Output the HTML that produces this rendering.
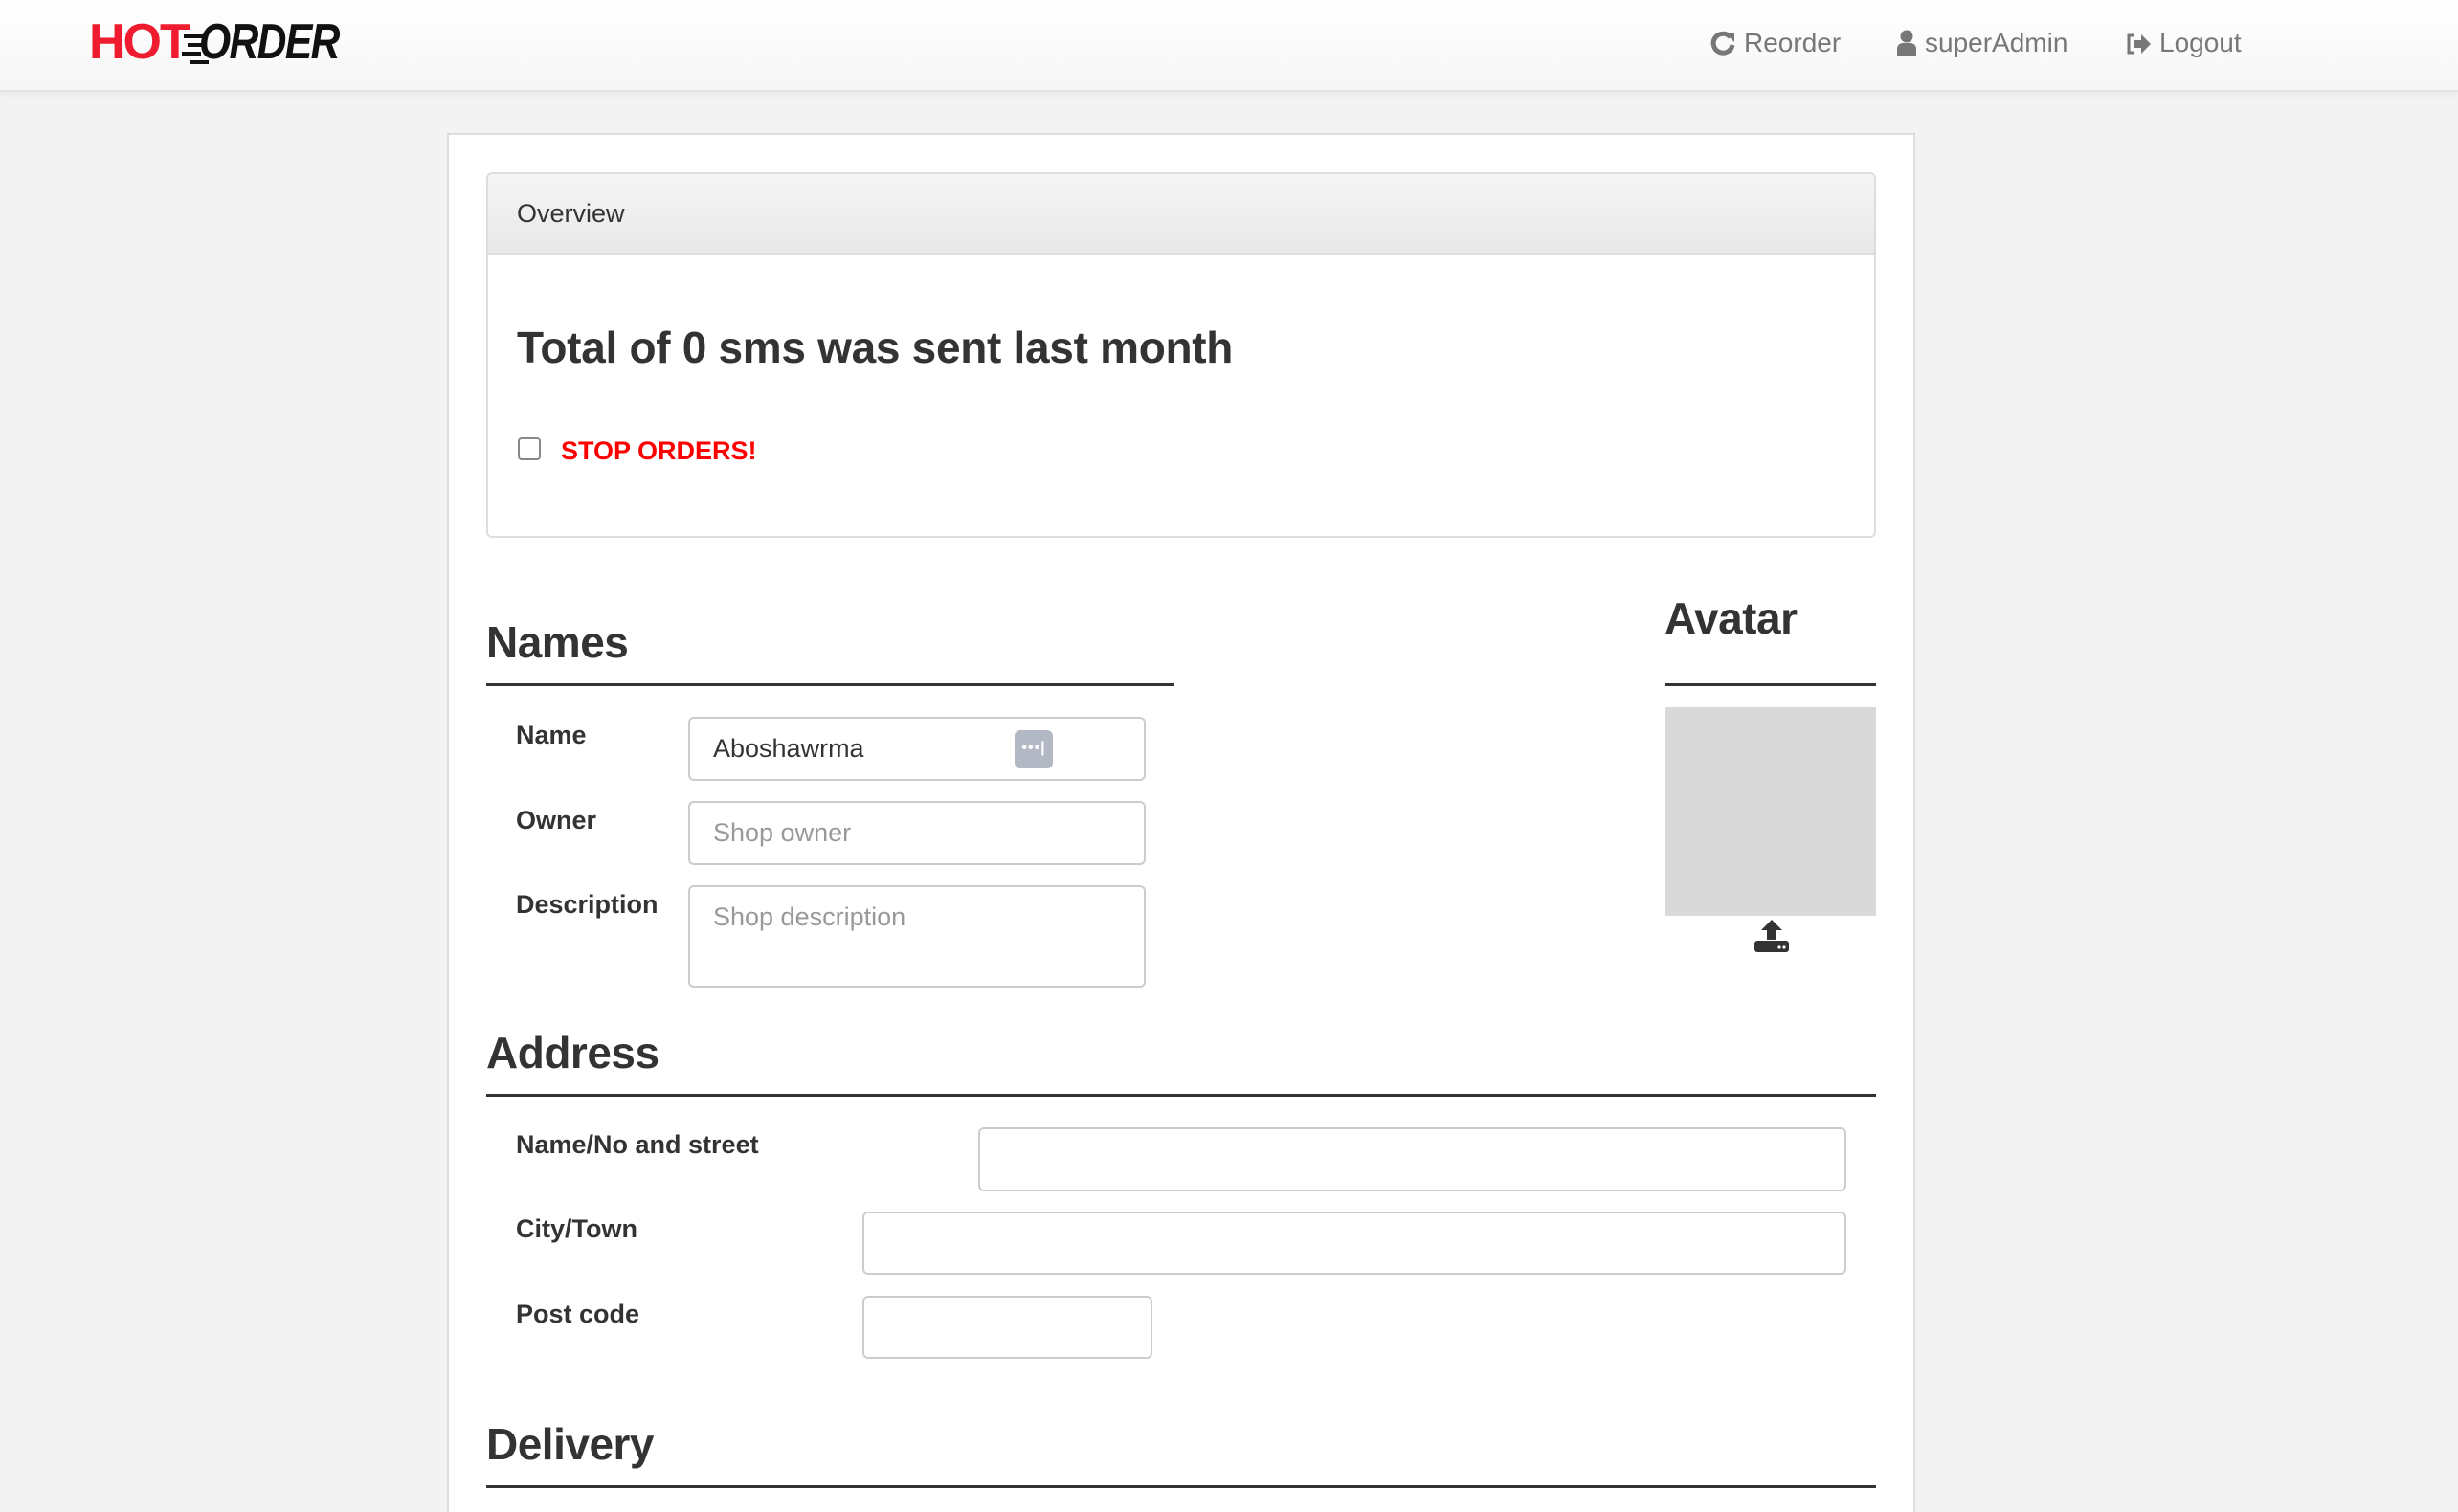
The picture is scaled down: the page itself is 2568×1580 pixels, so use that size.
<!DOCTYPE html>
<html style="width:2568px;height:1580px;overflow:hidden"><head><meta charset="utf-8"><style>
*{margin:0;padding:0;box-sizing:border-box}
body{width:2568px;height:1580px;background:#f3f3f3;font-family:"Liberation Sans",Arial,sans-serif;color:#333;position:relative;overflow:hidden}
.a{position:absolute}
.nav{left:0;top:0;width:2568px;height:96px;background:linear-gradient(#fff,#f6f6f6);border-bottom:2px solid #e4e4e4;box-shadow:0 2px 6px rgba(0,0,0,.06)}
.navt{font-size:28px;color:#777;top:29px}
.box{left:467px;top:139px;width:1534px;height:1441px;background:#fff;border:2px solid #ddd;border-bottom:none}
.panel{left:508px;top:180px;width:1452px;height:382px;border:2px solid #ddd;border-radius:6px;background:#fff;overflow:hidden}
.ph{left:0;top:0;width:100%;height:84px;background:linear-gradient(#f5f5f5,#e8e8e8);border-bottom:2px solid #ddd;font-size:27px;line-height:82px;padding-left:30px}
.h{font-size:46px;color:#333;font-weight:bold;letter-spacing:-0.5px}
.line{height:3px;background:#333}
.lbl{font-size:27px;font-weight:bold;color:#333}
.inp{border:2px solid #ccc;border-radius:6px;background:#fff;font-size:27px;color:#999;padding-left:24px}
</style></head><body>
<div class="a nav"></div>
<div class="a" style="left:93px;top:18px;font-size:52px;font-weight:bold;color:#ee1c2e;letter-spacing:-2px;line-height:52px">HOT</div>
<div class="a" style="left:192px;top:36px;width:20px;height:4px;background:#111;box-shadow:4px 9px 0 #111,-2px 18px 0 #111,6px 27px 0 #111"></div>
<div class="a" style="left:208px;top:18px;font-size:52px;font-weight:bold;font-style:italic;color:#111;letter-spacing:-2px;line-height:52px;transform:scaleX(0.82);transform-origin:0 0">ORDER</div>

<svg class="a" style="left:1787px;top:31px" width="26" height="28" viewBox="0 0 26 28"><path d="M21 8A10 10 0 1 0 23 16" fill="none" stroke="#777" stroke-width="5"/><path d="M15 3h10v10z" fill="#777"/></svg>
<div class="a navt" style="left:1822px">Reorder</div>
<svg class="a" style="left:1982px;top:31px" width="20" height="28" viewBox="0 0 20 28"><circle cx="10" cy="7" r="6.5" fill="#777"/><path d="M0 28v-8a6 6 0 0 1 6-6h8a6 6 0 0 1 6 6v8z" fill="#777"/></svg>
<div class="a navt" style="left:2011px">superAdmin</div>
<svg class="a" style="left:2221px;top:35px" width="26" height="22" viewBox="0 0 26 22"><path d="M9 2H3v18h6" fill="none" stroke="#777" stroke-width="3"/><path d="M8 7h8V1l10 10-10 10v-6H8z" fill="#777"/></svg>
<div class="a navt" style="left:2256px">Logout</div>

<div class="a box"></div>
<div class="a panel"><div class="a ph">Overview</div></div>
<div class="a" style="left:540px;top:336px;font-size:46px;font-weight:bold;letter-spacing:-0.3px;color:#333">Total of 0 sms was sent last month</div>
<div class="a" style="left:541px;top:457px;width:24px;height:24px;border:2px solid #888;border-radius:4px;background:#fff"></div>
<div class="a" style="left:586px;top:456px;font-size:27px;font-weight:bold;color:#f00">STOP ORDERS!</div>

<div class="a h" style="left:508px;top:644px">Names</div>
<div class="a line" style="left:508px;top:714px;width:719px"></div>
<div class="a h" style="left:1739px;top:619px">Avatar</div>
<div class="a line" style="left:1739px;top:714px;width:221px"></div>
<div class="a" style="left:1739px;top:739px;width:221px;height:218px;background:#d9d9d9"></div>
<svg class="a" style="left:1833px;top:961px" width="36" height="34" viewBox="0 0 36 34"><path d="M18 0l11 11h-6v10h-10v-10h-6z" fill="#333"/><rect x="0" y="22" width="36" height="12" rx="3" fill="#333"/><circle cx="26" cy="29" r="1.6" fill="#fff"/><circle cx="31" cy="29" r="1.6" fill="#fff"/></svg>

<div class="a lbl" style="left:539px;top:753px">Name</div>
<div class="a inp" style="left:719px;top:749px;width:478px;height:67px;line-height:63px;color:#333">Aboshawrma</div>
<div class="a" style="left:1060px;top:763px;width:40px;height:40px;background:#b3b9c4;border-radius:6px;color:#fff;font-size:16px;line-height:38px;text-align:center;font-weight:bold;letter-spacing:1px">•••|</div>
<div class="a lbl" style="left:539px;top:842px">Owner</div>
<div class="a inp" style="left:719px;top:837px;width:478px;height:67px;line-height:63px">Shop owner</div>
<div class="a lbl" style="left:539px;top:930px">Description</div>
<div class="a inp" style="left:719px;top:925px;width:478px;height:107px;line-height:63px">Shop description</div>

<div class="a h" style="left:508px;top:1073px">Address</div>
<div class="a line" style="left:508px;top:1143px;width:1452px"></div>
<div class="a lbl" style="left:539px;top:1181px">Name/No and street</div>
<div class="a inp" style="left:1022px;top:1178px;width:907px;height:67px"></div>
<div class="a lbl" style="left:539px;top:1269px">City/Town</div>
<div class="a inp" style="left:901px;top:1266px;width:1028px;height:66px"></div>
<div class="a lbl" style="left:539px;top:1358px">Post code</div>
<div class="a inp" style="left:901px;top:1354px;width:303px;height:66px"></div>

<div class="a h" style="left:508px;top:1482px">Delivery</div>
<div class="a line" style="left:508px;top:1552px;width:1452px"></div>
</body></html>
